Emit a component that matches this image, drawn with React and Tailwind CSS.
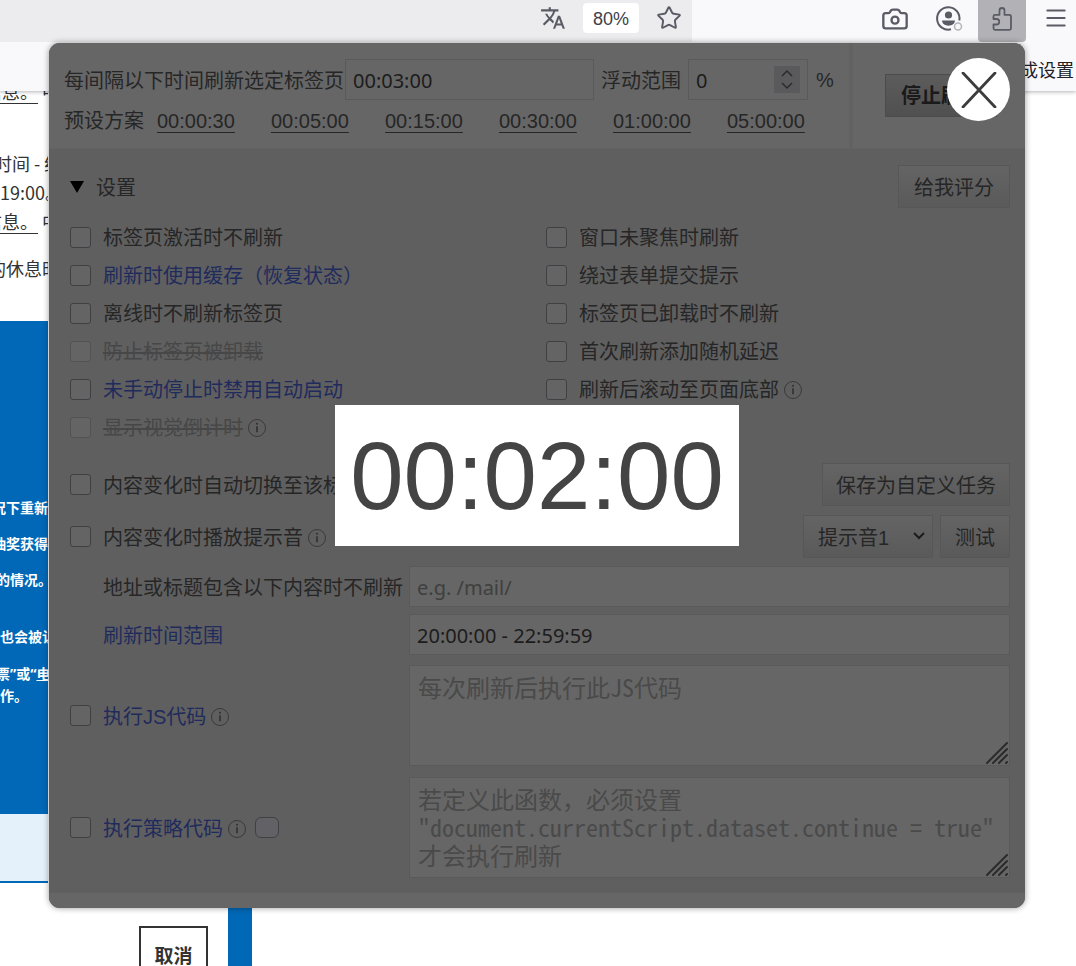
import React, { useState } from 'react'
import { Camera, Menu, Star } from 'lucide-react'
import { MdTranslate } from 'react-icons/md'

const PRESETS = ['00:00:30', '00:05:00', '00:15:00', '00:30:00', '01:00:00', '05:00:00']

const LEFT_OPTIONS = [
  { id: 'active', label: '标签页激活时不刷新' },
  { id: 'cache', label: '刷新时使用缓存（恢复状态）', link: true },
  { id: 'offline', label: '离线时不刷新标签页' },
  { id: 'discard', label: '防止标签页被卸载', disabled: true },
  { id: 'nostart', label: '未手动停止时禁用自动启动', link: true },
  { id: 'visual', label: '显示视觉倒计时', disabled: true, info: true },
]

const RIGHT_OPTIONS = [
  { id: 'blur', label: '窗口未聚焦时刷新' },
  { id: 'form', label: '绕过表单提交提示' },
  { id: 'unloaded', label: '标签页已卸载时不刷新' },
  { id: 'random', label: '首次刷新添加随机延迟' },
  { id: 'scroll', label: '刷新后滚动至页面底部', info: true },
]

const BUTTON = 'h-[43px] border border-[#575757] bg-linear-to-b from-[#646464] to-[#5a5a5a] pt-[2px] text-[#262626]'
const FIELD = 'h-[41px] border border-[#5a5a5a] bg-[#666] px-[7px] pt-[2px] font-["Noto_Sans","Noto_Sans_CJK_SC",sans-serif] text-[#1c1c1c] outline-none'
const CODE = 'h-[101px] flex-1 resize-none overflow-hidden border border-[#5a5a5a] bg-[#666] px-2 py-[7px] font-["Noto_Sans_Mono_CJK_SC","Liberation_Mono","Noto_Sans_CJK_SC",monospace] text-2xl leading-7 outline-none placeholder:text-[#4a4a4a]'

const InfoIcon = () => (
  <svg className="h-5 w-5 shrink-0 text-[#303030]" viewBox="0 0 20 20" fill="none" stroke="currentColor">
    <circle cx="10" cy="10" r="8.5" strokeWidth="0.8" />
    <path d="M10 8.2v6" strokeWidth="1.6" />
    <circle cx="10" cy="5.8" r="1" fill="currentColor" stroke="none" />
  </svg>
)

const AccountIcon = () => (
  <svg className="h-7 w-7" viewBox="0 0 28 28" fill="none" stroke="#5b5b66">
    <path d="M16 24.300A11.200 11.200 0 1 1 24.300 15.500" strokeWidth="2" />
    <circle cx="13.500" cy="10" r="3.600" fill="#5b5b66" stroke="none" />
    <path d="M7 15.500h13c-.3 3.400-3 5.200-6.500 5.200S7.300 18.900 7 15.500z" fill="#5b5b66" stroke="none" />
    <circle cx="23" cy="21.500" r="3.500" stroke="#b5b5bb" strokeWidth="1.500" />
  </svg>
)

const PuzzleIcon = () => (
  <svg className="h-7 w-7" viewBox="0 0 28 28" fill="none" stroke="#5b5b66" strokeWidth="1.8" strokeLinejoin="round">
    <path d="M5.500 14V11.300a1.500 1.500 0 0 1 1.500-1.500h4.500V5.500a2.500 2.500 0 0 1 5 0v4.300h5a1.500 1.500 0 0 1 1.500 1.500v12a1.500 1.500 0 0 1-1.500 1.500H7a1.500 1.500 0 0 1-1.500-1.500V19.500h3a2.700 2.700 0 0 0 0-5.500z" />
  </svg>
)

const ResizeGrip = () => (
  <svg className="pointer-events-none absolute right-0.5 bottom-0.5 h-[22px] w-[22px]" viewBox="0 0 22 22" stroke="#2b2b2b" strokeWidth="2" strokeLinecap="round">
    <path d="M1 21 21 1M7 21 21 7M13 21l8-8M20 21l1-1" />
  </svg>
)

const CheckBox = ({ id, disabled }) => (
  <input
    id={id}
    type="checkbox"
    disabled={disabled}
    className={`h-[21px] w-[21px] shrink-0 appearance-none rounded-[3px] border bg-[#646464] checked:bg-[#24356b] ${disabled ? 'border-[#525252]' : 'border-[#404044]'}`}
  />
)

const Option = ({ id, label, link, disabled, info }) => (
  <div className="flex h-[38px] items-center gap-3">
    <CheckBox id={id} disabled={disabled} />
    <label
      htmlFor={id}
      className={`flex items-center gap-1 pt-0.5 whitespace-nowrap ${disabled ? 'text-[#474747] line-through' : link ? 'text-[#1f2b5c]' : 'text-[#262626]'}`}
    >
      {label}
      {info && <InfoIcon />}
    </label>
  </div>
)

const Toolbar = () => (
  <header className="relative h-[91px] bg-[#f9f9fb] shadow-[0_1px_4px_rgba(0,0,0,0.3)]">
    <div className="flex h-[42px] justify-between">
      <div className="flex w-[692px] items-start justify-end gap-[17px] bg-[#ececef] pt-[3px] pr-[10px] text-[#5b5b66]">
        <button aria-label="翻译" className="pt-[2px]"><MdTranslate className="h-[26px] w-[26px]" /></button>
        <button className="h-[30px] w-14 rounded bg-white pt-[2px] font-['Liberation_Sans',sans-serif] text-lg text-[#404048]">80%</button>
        <button aria-label="收藏" className="pt-[2px]"><Star className="h-[26px] w-[26px]" strokeWidth={1.8} /></button>
      </div>
      <div className="flex items-start text-[#5b5b66]">
        <button aria-label="截图" className="pt-[5px] pr-[26px]"><Camera className="h-7 w-7" strokeWidth={2} /></button>
        <button aria-label="账户" className="pt-[5px] pr-[15px]"><AccountIcon /></button>
        <button aria-label="扩展" className="flex h-[42px] w-12 justify-center rounded-b bg-[#b2b2b6] pt-[5px]"><PuzzleIcon /></button>
        <button aria-label="菜单" className="pt-[5px] pr-[7px] pl-[17px]"><Menu className="h-[26px] w-[26px]" strokeWidth={1.8} /></button>
      </div>
    </div>
    <div className="flex h-[49px] items-center justify-end pt-[5px] pr-[2px] text-lg text-[#202028]">
      <a href="#settings">完成设置</a>
    </div>
  </header>
)

// The web page that lies behind the popup
const PageBehind = () => (
  <main>
    <div className="h-[230px] w-12 overflow-hidden text-lg leading-[29px] whitespace-nowrap text-[#333]">
      <p className="-mt-[14px] -ml-4"><a href="#info" className="underline underline-offset-4">信息。</a> 中</p>
      <p className="-ml-[6px] pt-[43px]">时间 - 结</p>
      <p>19:00。</p>
      <p className="-ml-4"><a href="#info2" className="underline underline-offset-4">信息。</a> 中</p>
      <p className="-ml-3 pt-[18px]">的休息时</p>
    </div>
    <div className="h-[493px] w-12 overflow-hidden bg-[#0068b7] pt-[176px] font-['Noto_Sans','Noto_Sans_CJK_SC',sans-serif] text-sm leading-[22px] font-bold whitespace-nowrap text-white">
      <p className="-ml-2">况下重新</p>
      <p className="-ml-2 pt-[14px]">抽奖获得</p>
      <p className="-ml-1 pt-[14px]">的情况。</p>
      <p className="pt-[35px]">也会被认</p>
      <p className="-ml-1 pt-[15px]">票”或“<u>电</u></p>
      <p>作。</p>
    </div>
    <div className="h-[69px] w-12 border-b-2 border-[#0068b7] bg-[#e5f1fa]" />
    <div className="flex gap-5 pl-[139px]">
      <button className="mt-[43px] h-[58px] w-[69px] border-2 border-[#333] text-[19px] font-bold text-[#333]">取消</button>
      <div className="mt-[25px] h-[90px] w-6 bg-[#0068b7]" />
    </div>
  </main>
)

const App = () => {
  const [interval, setInterval] = useState('00:03:00')
  const [drift, setDrift] = useState(0)
  const [range, setRange] = useState('20:00:00 - 22:59:59')
  const [open, setOpen] = useState(true)

  return (
    <div className="relative h-screen overflow-hidden bg-white font-['Noto_Sans_CJK_SC',sans-serif]">
      <Toolbar />
      <PageBehind />

      {open && (
        <div className="absolute top-[43px] right-[51px] left-[49px] overflow-hidden rounded-[11px] bg-[#5f5f5f] font-['Liberation_Sans','Noto_Sans_CJK_SC',sans-serif] text-xl text-[#262626] shadow-[0_0_6px_rgba(0,0,0,0.4)]">
          {/* Interval and presets */}
          <div className="flex h-[106px] border-b border-[#626262] bg-[#666]">
            <div className="flex-1 border-r-4 border-[#626262] pt-4 pl-[15px]">
              <div className="flex items-center whitespace-nowrap">
                <label htmlFor="interval" className="pt-0.5">每间隔以下时间刷新选定标签页</label>
                <input id="interval" value={interval} onChange={(e) => setInterval(e.target.value)} className={`${FIELD} ml-px w-[249px]`} />
                <label htmlFor="drift" className="ml-[7px] pt-0.5">浮动范围</label>
                <div className="relative ml-[7px]">
                  <input id="drift" inputMode="numeric" value={drift} onChange={(e) => setDrift(e.target.value)} className={`${FIELD} w-[120px]`} />
                  <svg className="absolute top-[7px] right-2 h-[27px] w-[26px] bg-[#5a5a5c]" viewBox="0 0 26 27" fill="none" stroke="#2b2b2b" strokeWidth="1.5">
                    <path d="M8 10l5-5 5 5M8 17l5 5 5-5" />
                  </svg>
                </div>
                <span className="ml-2">%</span>
              </div>
              <div className="flex h-10 items-center pt-0.5">
                <span className="w-[93px]">预设方案</span>
                {PRESETS.map((p) => (
                  <span key={p} className="w-[114px]">
                    <button onClick={() => setInterval(p)} className="underline decoration-1 underline-offset-4">{p}</button>
                  </span>
                ))}
              </div>
            </div>
            <div className="w-[172px] pt-[31px] pl-8">
              <button className="h-[43px] border border-[#4c4c4c] bg-linear-to-b from-[#5c5c5c] to-[#505050] px-[15px] font-bold text-[#1a1a1a]">停止刷新</button>
            </div>
          </div>

          <div className="pr-[15px] pb-[15px] pl-[21px]">
            <div className="flex items-center justify-between pt-4 pb-[10px]">
              <div className="flex items-center gap-3">
                <svg className="h-3 w-[14px]" viewBox="0 0 14 12"><path d="M0 0h14L7 12z" fill="#000" /></svg>
                <span className="pt-0.5">设置</span>
              </div>
              <button className={`${BUTTON} px-[15px]`}>给我评分</button>
            </div>

            <div className="grid grid-cols-2 gap-x-3">
              <div>{LEFT_OPTIONS.map((o) => <Option key={o.id} {...o} />)}</div>
              <div>{RIGHT_OPTIONS.map((o) => <Option key={o.id} {...o} />)}</div>
            </div>

            <div className="mt-[17px] flex items-center justify-between">
              <Option id="switch" label="内容变化时自动切换至该标签页" />
              <button className={`${BUTTON} px-[13px]`}>保存为自定义任务</button>
            </div>
            <div className="mt-[9px] flex items-center justify-between">
              <Option id="sound" label="内容变化时播放提示音" info />
              <div className="flex gap-[7px]">
                <div className="relative">
                  <select aria-label="提示音" className={`${BUTTON} w-[130px] appearance-none px-[14px]`}>
                    <option>提示音1</option>
                  </select>
                  <svg className="pointer-events-none absolute top-[17px] right-2 h-2 w-3" viewBox="0 0 12 8" fill="none" stroke="#1c1c1c" strokeWidth="2">
                    <path d="M1 1l5 5 5-5" />
                  </svg>
                </div>
                <button className={`${BUTTON} px-[14px]`}>测试</button>
              </div>
            </div>

            <div className="mt-2 flex items-center">
              <label htmlFor="exclude" className="w-[339px] pt-0.5 pl-[33px] whitespace-nowrap">地址或标题包含以下内容时不刷新</label>
              <input id="exclude" placeholder="e.g. /mail/" className={`${FIELD} flex-1 placeholder:text-[#3f3f3f]`} />
            </div>
            <div className="mt-[7px] flex items-center">
              <label htmlFor="range" className="w-[339px] pt-0.5 pl-[33px] text-[#1f2b5c]">刷新时间范围</label>
              <input id="range" value={range} onChange={(e) => setRange(e.target.value)} className={`${FIELD} flex-1`} />
            </div>

            <div className="mt-[10px] flex items-center">
              <div className="w-[339px]"><Option id="js" label="执行JS代码" link info /></div>
              <div className="relative flex flex-1">
                <textarea aria-label="JS代码" placeholder="每次刷新后执行此JS代码" className={CODE} />
                <ResizeGrip />
              </div>
            </div>
            <div className="mt-[11px] flex items-center">
              <div className="flex w-[339px] items-center gap-2">
                <Option id="policy" label="执行策略代码" link info />
                <button aria-label="示例" className="h-[21px] w-6 rounded-md border border-[#404044] bg-[#626266]" />
              </div>
              <div className="relative flex flex-1">
                <textarea
                  aria-label="策略代码"
                  placeholder={'若定义此函数，必须设置\n"document.currentScript.dataset.continue = true"\n才会执行刷新'}
                  className={CODE}
                />
                <ResizeGrip />
              </div>
            </div>
          </div>
          <div className="h-[15px] bg-[#666]" />

          {/* Countdown and close button */}
          <div className="pointer-events-none absolute inset-0 flex items-center justify-center">
            <output className="bg-white px-[15px] py-4 text-8xl/[109px] text-[#444]">00:02:00</output>
          </div>
          <button
            aria-label="关闭"
            onClick={() => setOpen(false)}
            className="absolute top-[15px] right-[15px] flex h-[63px] w-[63px] items-center justify-center rounded-full bg-white"
          >
            <svg className="h-9 w-9" viewBox="0 0 36 36" stroke="#3c3c3c" strokeWidth="2.8" strokeLinecap="round">
              <path d="M2 1l32 34M34 1L2 35" />
            </svg>
          </button>
        </div>
      )}
    </div>
  )
}

export default App
